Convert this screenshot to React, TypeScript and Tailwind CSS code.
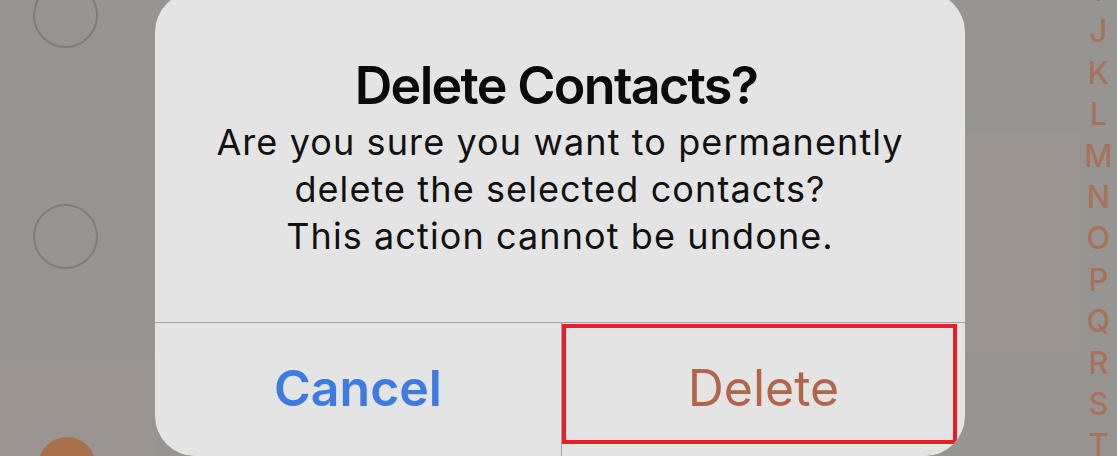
import React from "react";

const letters = ["I", "J", "K", "L", "M", "N", "O", "P", "Q", "R", "S", "T"];

export default function App() {
  return (
    <div className="w-[1117px] h-[456px] overflow-hidden bg-[#979591] flex font-['Inter',sans-serif]">
      {/* left list column */}
      <div className="w-[155px] shrink-0 flex flex-col overflow-hidden">
        <div className="h-[358px] shrink-0 flex flex-col pl-[33px]">
          <div className="mt-[-17px] w-[65px] h-[65px] shrink-0 rounded-full border-2 border-[#7f7d7a]" />
          <div className="mt-[156px] w-[65px] h-[65px] shrink-0 rounded-full border-2 border-[#7f7d7a]" />
        </div>
        <div className="flex-1 min-h-0 bg-[#9a9590] flex flex-col pl-[38px]">
          <div className="mt-[79px] w-[58px] h-[58px] rounded-full bg-[#a8714c] shrink-0" />
        </div>
      </div>

      {/* dialog */}
      <div className="w-[810px] h-[464px] mt-[-8px] shrink-0 rounded-[40px] bg-[#e4e4e4] flex flex-col overflow-hidden">
        <div className="h-[330px] shrink-0 flex flex-col items-center text-center">
          <div className="pt-[66px] pr-[8px] text-[52px] leading-[55px] font-semibold text-[#0a0a0a] tracking-[-1.7px]">
            Delete Contacts?
          </div>
          <div className="mt-[6px] text-[36px] leading-[47px] text-[#111111] tracking-[1.1px]">
            <div>Are you sure you want to permanently</div>
            <div>delete the selected contacts?</div>
            <div>This action cannot be undone.</div>
          </div>
        </div>
        <div className="flex-1 border-t border-[#a3a3a3] flex">
          <div className="w-[406px] flex items-center justify-center pb-[2px] text-[50px] font-semibold text-[#3e7be0]">
            Cancel
          </div>
          <div className="flex-1 border-l border-[#a3a3a3] relative flex items-center justify-center pb-[2px] text-[50px] text-[#b3654c]">
            Delete
            <div className="absolute left-0 top-[1px] right-[8px] bottom-[12px] border-[4px] border-[#ec1c24]" />
          </div>
        </div>
      </div>

      {/* right index column */}
      <div className="flex-1 flex">
        <div className="w-[115px] shrink-0 mt-[133px] h-[220px] bg-[#9a9590]" />
        <div className="flex-1 flex flex-col items-center mt-[-31px]">
          {letters.map((l) => (
            <div key={l} className="h-[41.4px] shrink-0 leading-[41.4px] text-[31px] font-medium text-[#a6735a]">
              {l}
            </div>
          ))}
        </div>
      </div>
    </div>
  );
}
